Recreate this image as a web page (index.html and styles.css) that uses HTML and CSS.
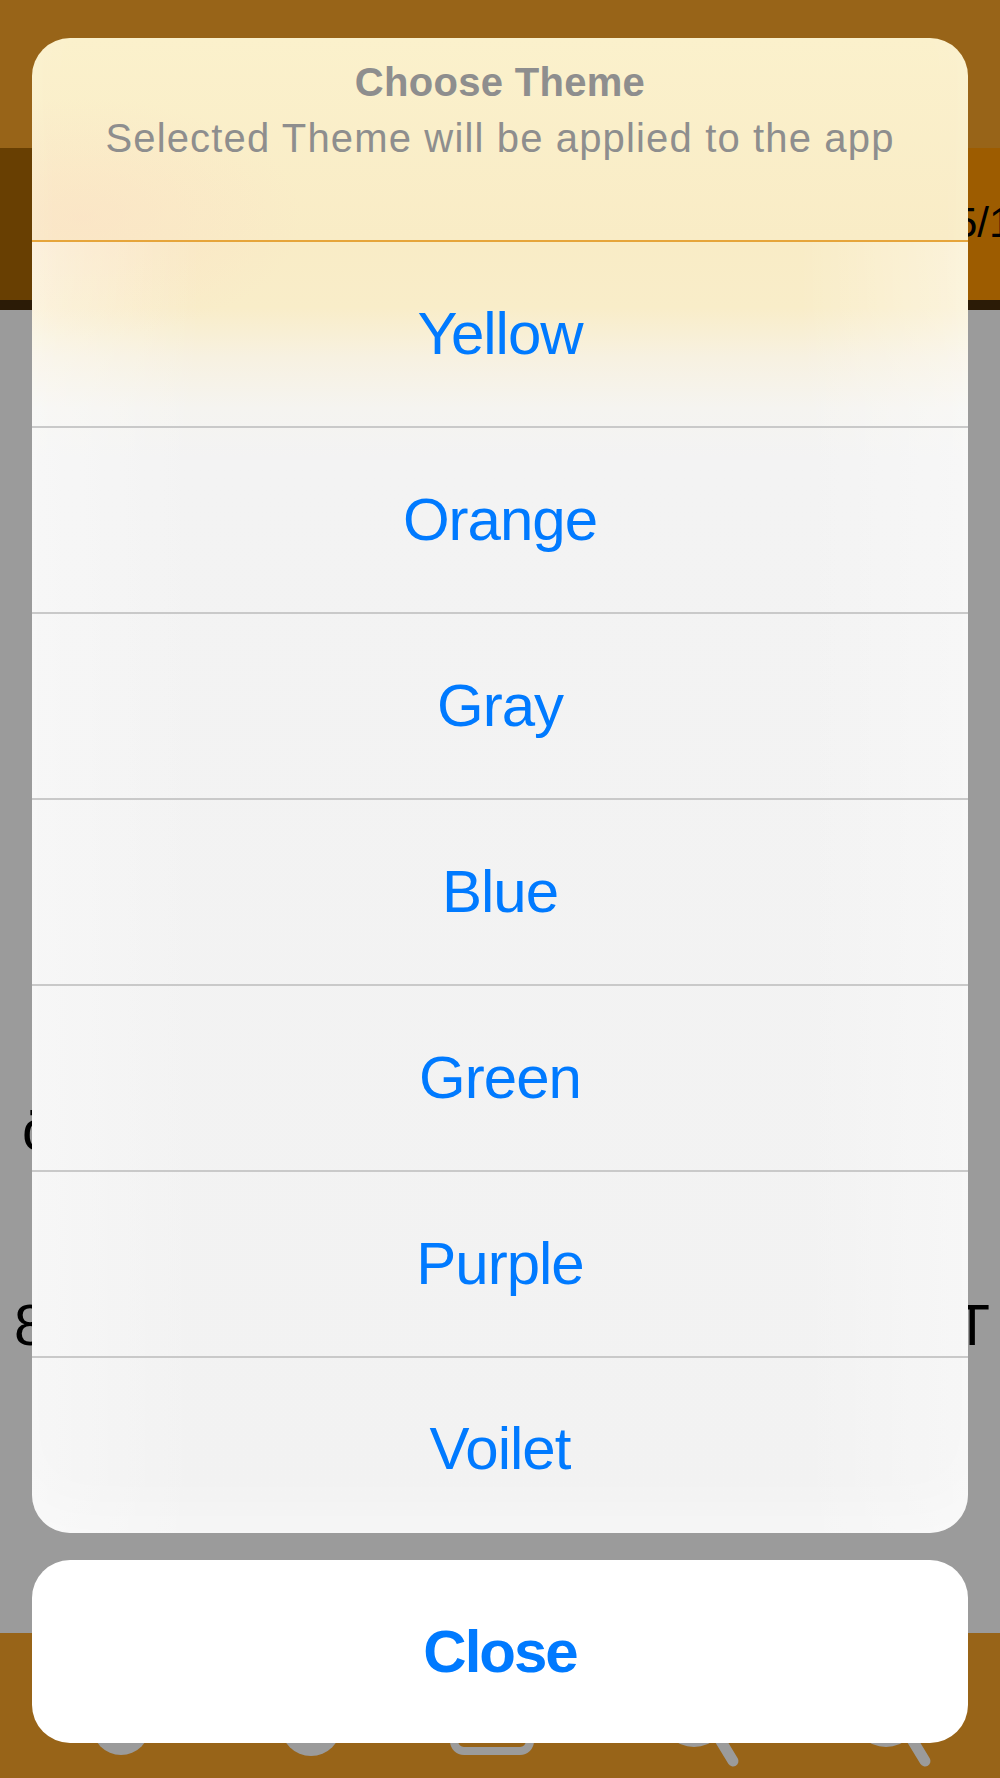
FILE: index.html
```html
<!DOCTYPE html>
<html>
<head>
  <meta charset="UTF-8">
  <title>Choose Theme</title>
  <link rel="stylesheet" href="styles.css">
</head>
<body>
  <!-- Page behind the dimmed overlay -->
  <div class="app">
    <div class="navbar"></div>
    <div class="segbar">
      <div class="seg segLeft"></div>
      <div class="seg segRight"><span class="segCount">5/15</span></div>
    </div>
    <div class="segShadow"></div>
    <div class="content">
      <div class="line lineA"><span>ö</span></div>
      <div class="line lineB"><span>8</span><span>T</span></div>
    </div>
    <div class="tabbar">
      <svg class="tabIcons" width="1000" height="145" viewBox="0 0 1000 145">
        <circle cx="121" cy="93" r="29" fill="#9b9b9b"/>
        <circle cx="311" cy="93" r="30" fill="#9b9b9b"/>
        <rect x="454" y="72" width="76" height="46" rx="10" fill="none" stroke="#9b9b9b" stroke-width="8"/>
        <circle cx="694" cy="80" r="30" fill="none" stroke="#9b9b9b" stroke-width="8"/>
        <line x1="716" y1="100" x2="733" y2="128" stroke="#9b9b9b" stroke-width="11" stroke-linecap="round"/>
        <circle cx="886" cy="80" r="30" fill="none" stroke="#9b9b9b" stroke-width="8"/>
        <line x1="908" y1="100" x2="925" y2="128" stroke="#9b9b9b" stroke-width="11" stroke-linecap="round"/>
      </svg>
    </div>
  </div>

  <!-- Action sheet -->
  <div class="overlay">
    <div class="sheet">
      <div class="sheetHead">
        <div class="sheetTitle">Choose Theme</div>
        <div class="sheetMessage">Selected Theme will be applied to the app</div>
      </div>
      <div class="sheetRow">Yellow</div>
      <div class="sheetRow">Orange</div>
      <div class="sheetRow">Gray</div>
      <div class="sheetRow">Blue</div>
      <div class="sheetRow">Green</div>
      <div class="sheetRow">Purple</div>
      <div class="sheetRow lastRow">Voilet</div>
    </div>
    <div class="cancelBtn">Close</div>
  </div>
</body>
</html>
```

FILE: styles.css
```css
body {
  margin: 0;
  padding: 0;
  font-family: "Liberation Sans", Arial, sans-serif;
  background-color: #9b9b9b;
}
.app {
  width: 1000px;
  height: 1778px;
  display: flex;
  flex-direction: column;
  overflow: hidden;
}
/* Top bars behind the sheet */
.navbar {
  height: 148px;
  background-color: #986418;
}
.segbar {
  height: 152px;
  display: flex;
}
.seg {
  flex: 1;
  min-width: 0;
  overflow: hidden;
}
.segLeft {
  background-color: #683f02;
}
.segRight {
  background-color: #9d5c00;
  padding-top: 50px;
  box-sizing: border-box;
}
.segCount {
  display: block;
  padding-left: 454px;
  font-size: 42px;
  line-height: 50px;
  color: #000;
  white-space: nowrap;
}
.segShadow {
  height: 10px;
  background-color: #2b1b06;
}
/* Dimmed content */
.content {
  flex: 1;
  padding-top: 791px;
  color: #000;
  font-size: 58px;
  line-height: 58px;
}
.line {
  display: flex;
  justify-content: space-between;
}
.lineA {
  padding-left: 22px;
}
.lineB {
  margin-top: 137px;
  padding-left: 14px;
  padding-right: 10px;
}
.tabbar {
  height: 145px;
  background-color: #986418;
}
.tabIcons {
  display: block;
}
/* Action sheet overlay */
.overlay {
  position: absolute;
  top: 38px;
  left: 32px;
  right: 32px;
  display: flex;
  flex-direction: column;
  gap: 27px;
}
.sheet {
  border-radius: 38px;
  overflow: hidden;
  background:
    radial-gradient(ellipse 220px 120px at 50px 180px, rgba(252, 224, 198, 0.55), rgba(252, 224, 198, 0)),
    linear-gradient(180deg, #fbf1cc 0, #f9ecc6 200px, #f9edc9 270px, #f7f1e1 320px, #f5f4f0 370px, #f3f3f3 420px, #f2f2f2 100%);
  box-shadow: inset 0 -40px 60px -20px rgba(255, 255, 255, 0.4);
}
.sheetHead {
  height: 204px;
  box-sizing: border-box;
  padding-top: 20px;
  border-bottom: 2px solid #e6a53b;
  text-align: center;
  color: #8e8e8e;
}
.sheetTitle {
  font-size: 40px;
  line-height: 48px;
  font-weight: bold;
  letter-spacing: 0.3px;
}
.sheetMessage {
  margin-top: 8px;
  font-size: 40px;
  line-height: 48px;
  letter-spacing: 1.15px;
}
.sheetRow {
  height: 184px;
  border-bottom: 2px solid #c9c9c9;
  display: flex;
  align-items: center;
  justify-content: center;
  font-size: 60px;
  line-height: 60px;
  letter-spacing: -1px;
  color: #007aff;
  background: linear-gradient(90deg, rgba(255, 255, 255, 0.35), rgba(255, 255, 255, 0) 18%, rgba(255, 255, 255, 0) 82%, rgba(255, 255, 255, 0.35));
}
.lastRow {
  height: 175px;
  box-sizing: border-box;
  padding-top: 7px;
  border-bottom: none;
}
.cancelBtn {
  height: 183px;
  border-radius: 38px;
  background-color: #fff;
  display: flex;
  align-items: center;
  justify-content: center;
  font-size: 60px;
  line-height: 60px;
  font-weight: bold;
  letter-spacing: -2px;
  color: #007aff;
}
```
